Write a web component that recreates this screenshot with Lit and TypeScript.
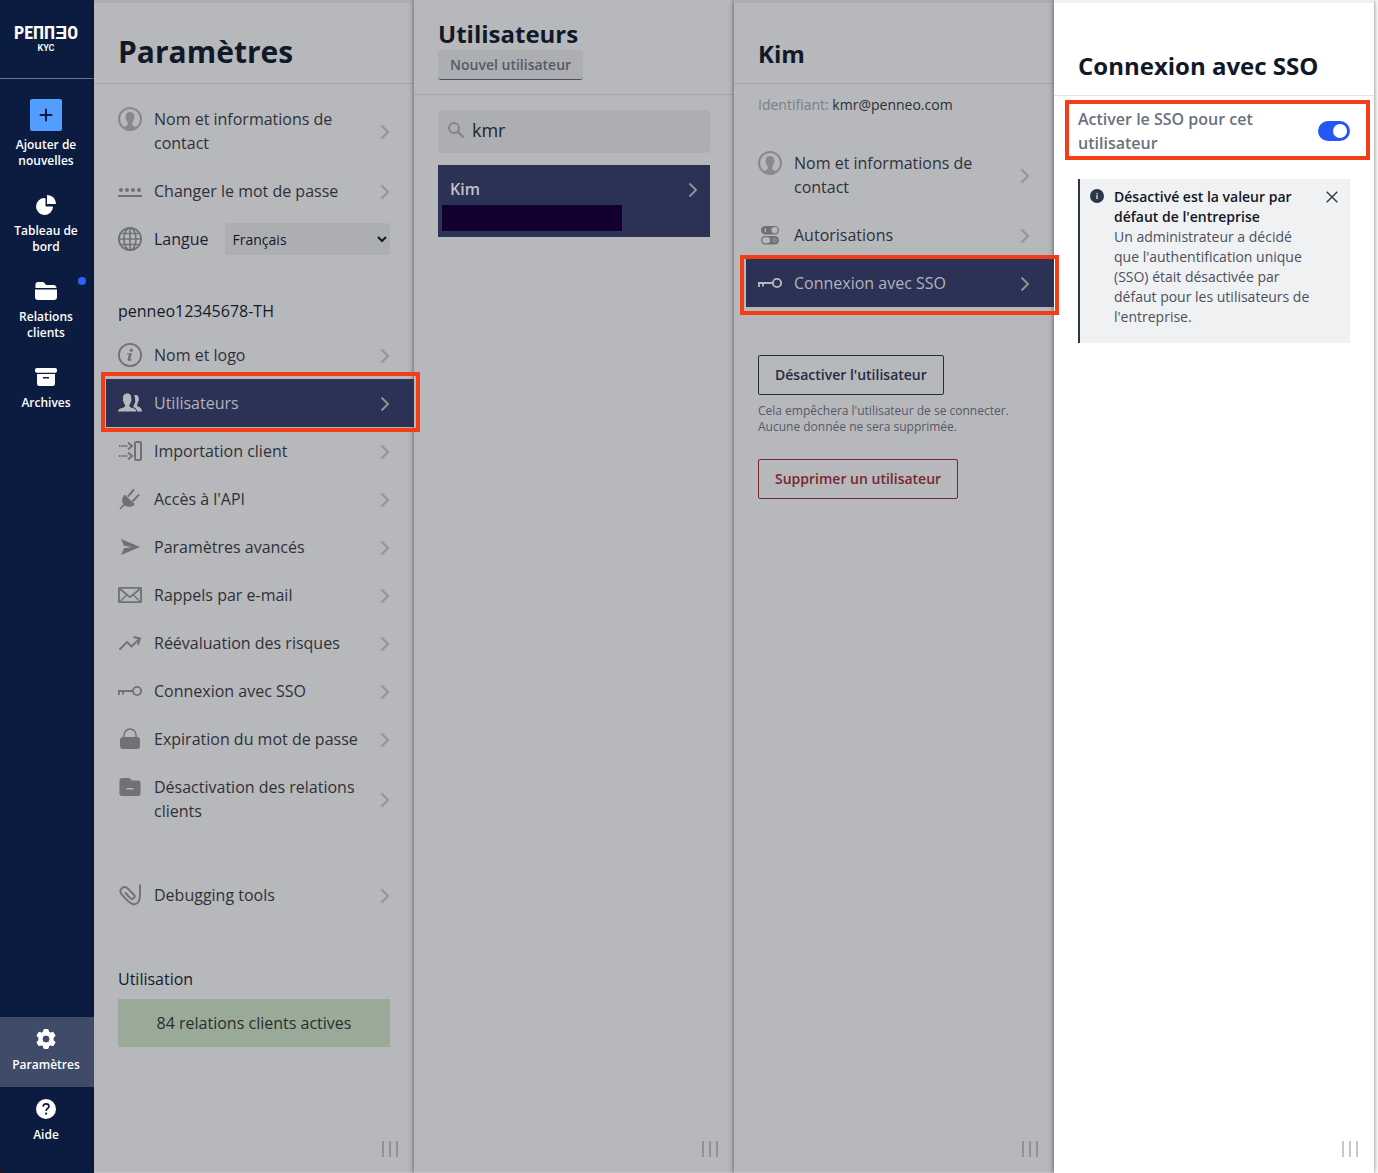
import { LitElement, html, css, svg, nothing, TemplateResult } from "lit";
import { customElement, property } from "lit/decorators.js";
import { classMap } from "lit/directives/class-map.js";

type MenuItem = { icon: string; label: string; active?: boolean; mark?: string };

const icons: Record<string, TemplateResult> = {
  user: svg`<g opacity=".65"><circle cx="12" cy="12" r="11" fill="none" stroke="currentColor" stroke-width="2"/>
    <path fill="currentColor" d="M12 5c-2.800 0-4.200 1.600-4.200 4.200 0 1-.4 1.200-.1 2.200.2.7.6.8.8 1.600.3 1.300.6 1.900 1.200 2.600V18c-.8 1.300-3.400 1.500-5 2.700A11 11 0 0 0 12 23.500a11 11 0 0 0 7.300-2.800c-1.600-1.200-4.200-1.400-5-2.700v-2.400c.6-.7.900-1.300 1.200-2.600.2-.8.6-.9.8-1.600.3-1-.1-1.200-.1-2.200C16.200 6.600 14.800 5 12 5z"/></g>`,
  password: svg`<g fill="currentColor"><circle cx="3" cy="11" r="2"/><circle cx="9" cy="11" r="2"/><circle cx="15" cy="11" r="2"/><circle cx="21" cy="11" r="2"/><path d="M0 16h24v2H0z"/></g>`,
  globe: svg`<g fill="none" stroke="currentColor" stroke-width="1.600"><circle cx="12" cy="12" r="11.100" stroke-width="1.800"/><ellipse cx="12" cy="12" rx="6" ry="11"/><path d="M12 1v22M1 12h22M3.500 6.500h17M3.500 17.500h17"/></g>`,
  info: svg`<circle cx="12" cy="12" r="11.100" fill="none" stroke="currentColor" stroke-width="1.800"/><circle cx="13.300" cy="7.200" r="1.600" fill="currentColor"/><path fill="currentColor" d="M9 10.600l4.900-.6-1.700 6.300c-.1.500.2.6.6.3l1-.8.300.4c-1 1.200-2 1.900-3 1.900-1.300 0-1.700-.8-1.400-2l1.200-4.300c.1-.5 0-.6-.5-.6H9z"/>`,
  users: svg`<g fill="currentColor"><path d="M16 4.600c2.800-1.600 5.200.2 4.700 3.600.4.800.2 1.700-.4 2.200-.3 1.600-.9 2.200-1.200 2.800v1.600c1.200 1.600 4.900 1.400 4.900 5.700h-4.600c-.4-2.500-2.200-3.500-4.200-4.500.1-1.300.9-2.300 1.300-3.600.9-1.100 1-2.500.5-3.500.2-1.700-.1-3.100-1-4.300z"/><path d="M9.200 2.600C6.200 2.600 4.700 4.700 5.100 8c-.5.900-.2 2.100.5 2.700.2 1.400.7 2.300 1.400 3v1.700C5.800 17.300 0 16.800 0 20.500h18.400c0-3.700-5.800-3.200-7-5.100v-1.700c.7-.7 1.200-1.600 1.400-3 .7-.6 1-1.800.5-2.700.4-3.300-1.100-5.400-4.100-5.400z"/></g>`,
  import: svg`<g fill="none" stroke="currentColor"><rect x="17" y="3" width="6" height="18" rx="1.500" stroke-width="2"/><path d="M1 7h9M1 17h9" stroke-width="1.800" stroke-dasharray="1.400 .8"/><path d="M10 3.500L14 7l-4 3.500M10 13.500l4 3.500-4 3.500" stroke-width="1.900"/></g>`,
  plug: svg`<g fill="currentColor"><path d="M6.600 7.400L17 17.200c-3 3.200-7.300 3.200-10.300 1L3 21.900l-1.500.4.400-1.500 3.500-3.600c-2-2.900-1.700-6.700 1.200-9.800z"/></g><path d="M9.800 9.600L16 2.500M14.500 14.500l6.500-6.900" fill="none" stroke="currentColor" stroke-width="2"/>`,
  send: svg`<path fill="currentColor" d="M3 4l19 8-19 8 3-6.800 8-1.200-8-1.200z"/>`,
  mail: svg`<g fill="none" stroke="currentColor"><rect x=".9" y="4.900" width="22.200" height="14.200" rx=".6" stroke-width="1.900"/><path d="M2 6l10 8.200L22 6" stroke-width="1.800"/><path d="M2.500 18l6-6M21.500 18l-6-6" stroke-width="1.200"/></g>`,
  trend: svg`<path fill="none" stroke="currentColor" stroke-width="1.800" d="M1.500 18.500L9 11l4.500 4.500L22 7.500M15.500 6l6.500 1.500-2 6.500"/>`,
  key: svg`<g fill="none" stroke="currentColor"><circle cx="19" cy="12" r="4.100" stroke-width="1.900"/><path d="M15 12H0" stroke-width="2"/><path d="M1 12v4M5 12v3.500" stroke-width="1.800"/></g>`,
  lock: svg`<rect x="2" y="10" width="20" height="12" rx="3" fill="currentColor"/><path d="M6 11V8a6 6 0 0 1 12 0v3" fill="none" stroke="currentColor" stroke-width="1.500"/>`,
  folder: svg`<path fill="currentColor" fill-rule="evenodd" d="M4 3h6.500c1 0 1.600.4 2.300 1.200L14 5.500h6a2.500 2.500 0 0 1 2.500 2.500v10.500A2.500 2.500 0 0 1 20 21H4a2.500 2.500 0 0 1-2.500-2.500v-13A2.500 2.500 0 0 1 4 3zm4.500 10v1.400h7V13z"/>`,
  clip: svg`<path fill="none" stroke="currentColor" stroke-width="1.900" d="M22 1.500v10c0 6-1 9.500-5.500 9.800-3.500 0-5-1.500-8-4.700l-4.800-5.200c-3.600-4 1.600-10.400 6.200-5.800l5.800 5.900c2.400 2.700-1 6-3.600 3.400L7 9.500"/>`,
  toggles: svg`<g fill="currentColor"><rect x="3" y="3" width="18" height="8.400" rx="4.200"/><rect x="3" y="13" width="18" height="8.400" rx="4.200"/></g><g class="hole"><circle cx="16.600" cy="7.200" r="3.100"/><rect x="6.800" y="5.200" width="1.200" height="4"/><rect x="4.300" y="14.200" width="7.800" height="6" rx="3"/></g><circle cx="16.600" cy="17.200" r="1.700" fill="none" stroke="#a0a1a5" stroke-width="1"/>`,
  pie: svg`<g fill="currentColor"><path d="M10.500 5a8.500 8.500 0 1 0 8.500 9c0-.3-.2-.5-.5-.5h-7V5.500c0-.3-.5-.5-1-.5z"/><path d="M13 2.500v8.500h8.500c.4 0 .5-.2.500-.5a8.800 8.800 0 0 0-8.500-8.500c-.3 0-.5.200-.5.500z"/></g>`,
  folders: svg`<g fill="currentColor"><path d="M1.500 9V5.500A2.500 2.500 0 0 1 4 3h4.500c1 0 1.500.3 2.200 1.200L12 6h7.500c1.800 0 2.800 1 3 3z"/><path d="M1 10.500h22V18a3 3 0 0 1-3 3H4a3 3 0 0 1-3-3z"/></g>`,
  archive: svg`<g fill="currentColor"><rect x="1" y="3" width="22" height="4.800" rx="1.800"/><path fill-rule="evenodd" d="M3 9h18v9.500a2.500 2.500 0 0 1-2.500 2.500h-13A2.500 2.500 0 0 1 3 18.500zm6 3v1.500h6V12z"/></g>`,
  gear: svg`<path fill="currentColor" fill-rule="evenodd" d="M10 2.500h4l.7 2.600 1.700 1 2.700-.8 2 3.500-2 1.900v2.600l2 1.900-2 3.500-2.700-.8-1.700 1-.7 2.600h-4l-.7-2.600-1.700-1-2.700.8-2-3.500 2-1.900v-2.600l-2-1.900 2-3.500 2.700.8 1.700-1zM12 8a4 4 0 1 0 0 8 4 4 0 0 0 0-8z" stroke="currentColor" stroke-width="1" stroke-linejoin="round"/>`,
  help: svg`<circle cx="12" cy="12" r="10" fill="currentColor"/><path d="M9.100 9.600C9.200 8 10.400 6.900 12 6.900c1.700 0 3 1 3 2.500 0 1.900-2.900 2.300-2.900 4.500" fill="none" stroke="#0c1c40" stroke-width="1.700"/><circle cx="12.100" cy="16.700" r="1.100" fill="#0c1c40"/>`,
};

const glyph = (name: string) =>
  html`<svg class="glyph" viewBox="0 0 24 24" aria-hidden="true">${icons[name]}</svg>`;

const chevron = html`<svg class="chevron" viewBox="0 0 10 20" aria-hidden="true">
  <path d="M1.500 4.500l6.500 6.500-6.500 6.500" fill="none" stroke="currentColor" stroke-width="1.900" />
</svg>`;

const menu = (items: MenuItem[]) => html`<ul class="menu">
  ${items.map(
    (item) => html`<li class="entry">
      <a class=${classMap({ row: true, active: !!item.active })} href="#">
        ${glyph(item.icon)}<span class="label">${item.label}</span>${chevron}
      </a>
      ${item.mark ? html`<span class="mark ${item.mark}"></span>` : nothing}
    </li>`
  )}
</ul>`;

const accountItems: MenuItem[] = [
  { icon: "user", label: "Nom et informations de contact" },
  { icon: "password", label: "Changer le mot de passe" },
];

const companyItems: MenuItem[] = [
  { icon: "info", label: "Nom et logo" },
  { icon: "users", label: "Utilisateurs", active: true, mark: "mark-users" },
  { icon: "import", label: "Importation client" },
  { icon: "plug", label: "Accès à l'API" },
  { icon: "send", label: "Paramètres avancés" },
  { icon: "mail", label: "Rappels par e-mail" },
  { icon: "trend", label: "Réévaluation des risques" },
  { icon: "key", label: "Connexion avec SSO" },
  { icon: "lock", label: "Expiration du mot de passe" },
  { icon: "folder", label: "Désactivation des relations clients" },
];

const userItems: MenuItem[] = [
  { icon: "user", label: "Nom et informations de contact" },
  { icon: "toggles", label: "Autorisations" },
  { icon: "key", label: "Connexion avec SSO", active: true, mark: "mark-sso" },
];

@customElement("side-bar")
class SideBar extends LitElement {
  static styles = css`
    :host {
      display: flex;
      flex-direction: column;
      box-sizing: border-box;
      background: #0c1c40;
      border-radius: 0 0 0 6px;
      padding-bottom: 16px;
      color: #fff;
    }
    .brand {
      display: flex;
      flex-direction: column;
      align-items: center;
      box-sizing: border-box;
      height: 79px;
      padding: 24px 2px 0 0;
      border-bottom: 1px solid #6d768b;
    }
    .wordmark {
      font: 700 18px/18px "Roboto Condensed", "Liberation Sans Narrow", Roboto, sans-serif;
    }
    .product {
      font: 600 9px/12px Roboto, sans-serif;
    }
    .links {
      padding-top: 8px;
      flex: 1;
    }
    .item {
      position: relative;
      display: flex;
      flex-direction: column;
      align-items: center;
      gap: 6px;
      padding: 10px 10px 14px 8px;
      color: inherit;
      text-decoration: none;
      text-align: center;
      font-size: 12px;
      line-height: 16px;
      font-weight: 600;
    }
    .current {
      background: #3f4b68;
    }
    .primary {
      padding-top: 12px;
    }
    .glyph {
      width: 24px;
      height: 24px;
    }
    .add {
      width: 32px;
      height: 32px;
      border-radius: 2px;
      background: #539dff;
    }
    .dot {
      position: absolute;
      top: 8px;
      right: 8px;
      width: 8px;
      height: 8px;
      border-radius: 50%;
      background: #2962ff;
    }
  `;

  private link(icon: string, label: string, current = false, dot = false) {
    return html`<a class=${classMap({ item: true, current })} href="#">
      ${glyph(icon)}<span>${label}</span>${dot ? html`<span class="dot"></span>` : nothing}
    </a>`;
  }

  render() {
    return html`
      <div class="brand"><span class="wordmark">PEΠΠƎO</span><span class="product">KYC</span></div>
      <nav class="links">
        <a class="item primary" href="#">
          <svg class="add" viewBox="0 0 32 32" aria-hidden="true">
            <path d="M16 10.500v11M10.500 16h11" stroke="#0c1c40" stroke-width="2" stroke-linecap="round" />
          </svg>
          <span>Ajouter de nouvelles</span>
        </a>
        ${this.link("pie", "Tableau de bord")} ${this.link("folders", "Relations clients", false, true)}
        ${this.link("archive", "Archives")}
      </nav>
      ${this.link("gear", "Paramètres", true)} ${this.link("help", "Aide")}
    `;
  }
}

@customElement("settings-panel")
class SettingsPanel extends LitElement {
  @property() heading = "";
  @property({ reflect: true }) tone = "dim";
  @property({ reflect: true }) top = "normal";

  static styles = css`
    :host {
      display: flex;
      flex-direction: column;
      box-sizing: border-box;
      min-width: 0;
      background: #b7b8bc;
      border-top: 3px solid #adaeb2;
      border-bottom: 1px solid #c4c5c8;
      box-shadow: 0 0 5px rgba(0, 0, 0, 0.55);
    }
    :host([tone="light"]) {
      background: #fff;
      border-color: #f2f2f2 #fff #fff;
    }
    :host([top="compact"]) {
      border-top: 0;
    }
    .head {
      display: flex;
      flex-direction: column;
      align-items: flex-start;
      gap: 1px;
      padding: 36px 24px 14px;
      border-bottom: 1px solid #a4a5a9;
    }
    :host([top="main"]) .head {
      padding: 31px 24px 13px;
    }
    :host([top="compact"]) .head {
      padding-top: 19px;
    }
    :host([top="low"]) .head {
      padding-top: 48px;
    }
    :host([tone="light"]) .head {
      border-color: #e3e4e6;
    }
    .title {
      margin: 0;
      font-size: 24px;
      line-height: 30px;
      font-weight: 700;
      color: #111827;
    }
    :host([top="main"]) .title {
      font-size: 30px;
      line-height: 36px;
    }
    .grip {
      display: flex;
      gap: 5px;
      align-self: flex-end;
      margin: auto 16px 15px 0;
    }
    .bar {
      width: 2px;
      height: 16px;
      background: #929397;
    }
    :host([tone="light"]) .bar {
      background: #c9c9c9;
    }
  `;

  render() {
    return html`
      <header class="head"><h2 class="title">${this.heading}</h2><slot name="action"></slot></header>
      <slot></slot>
      <div class="grip"><span class="bar"></span><span class="bar"></span><span class="bar"></span></div>
    `;
  }
}

@customElement("app-root")
class AppRoot extends LitElement {
  static styles = css`
    :host {
      display: grid;
      grid-template-columns: 94px repeat(4, minmax(0, 1fr));
      box-sizing: border-box;
      min-height: 100vh;
      padding-right: 4px;
      background: linear-gradient(90deg, #1a1a10 94px, #fff 94px);
      font-family: "Open Sans", "Noto Sans", sans-serif;
      font-size: 16px;
      line-height: 24px;
      color: #1c2030;
    }
    button,
    input,
    select {
      font-family: inherit;
      box-sizing: border-box;
    }
    .menu {
      list-style: none;
      margin: 0;
      padding: 0 0 0 12px;
    }
    .entry {
      position: relative;
    }
    .row {
      display: flex;
      gap: 12px;
      padding: 12px 24px 12px 12px;
      color: #2f3136;
      text-decoration: none;
    }
    .glyph {
      flex: none;
      width: 24px;
      height: 24px;
      color: #6f7176;
    }
    .hole {
      fill: #b7b8bc;
    }
    .label {
      flex: 1;
    }
    .chevron {
      flex: none;
      align-self: center;
      width: 10px;
      height: 20px;
      color: #929397;
    }
    .active {
      background: #2b3255;
      color: #b2b4ba;
    }
    .active .glyph {
      color: #b7b8bc;
    }
    .mark {
      position: absolute;
      z-index: 3;
      border: 4px solid #f23d17;
      pointer-events: none;
    }
    .mark-users {
      inset: -7px -6px -5px -5px;
    }
    .mark-sso {
      inset: -4px -5px -8px -6px;
    }
    .mark-switch {
      inset: -7px -20px -5px -13px;
    }
    .body {
      padding-top: 11px;
    }
    .language {
      display: flex;
      align-items: center;
      gap: 12px;
      height: 48px;
      padding: 0 24px;
    }
    .picker {
      position: relative;
      flex: 1;
      display: flex;
      margin-left: 4px;
    }
    .select {
      appearance: none;
      width: 100%;
      height: 32px;
      padding: 0 24px 0 8px;
      border: 0;
      border-radius: 4px;
      background: #adaeb2;
      font-size: 14px;
      color: #111827;
    }
    .arrow {
      position: absolute;
      right: 2px;
      top: 10px;
      width: 12px;
      height: 12px;
      pointer-events: none;
    }
    .subhead {
      margin: 0;
      padding: 36px 24px 8px;
      font-size: 16px;
      line-height: 24px;
      font-weight: 400;
      color: #151a29;
    }
    .spaced {
      padding-top: 36px;
    }
    .usage {
      padding-top: 48px;
    }
    .quota {
      margin: 0 24px 24px;
      padding: 12px;
      background: #9aaa98;
      text-align: center;
      color: #26302e;
    }
    .new {
      height: 30px;
      padding: 0 12px;
      border: 0;
      border-bottom: 1px solid #4c5064;
      border-radius: 3px;
      background: #adaeb2;
      font-size: 14px;
      font-weight: 600;
      color: #555969;
    }
    .users {
      display: flex;
      flex-direction: column;
      gap: 12px;
      padding: 15px 24px 0;
    }
    .search {
      display: flex;
      align-items: center;
      box-sizing: border-box;
      gap: 8px;
      height: 43px;
      padding: 0 10px 3px;
      border-radius: 4px;
      background: #adaeb2;
    }
    .lens {
      width: 16px;
      height: 16px;
      color: #85868a;
    }
    .query {
      flex: 1;
      min-width: 0;
      padding: 0;
      border: 0;
      outline: 0;
      background: none;
      font-size: 18px;
      color: #20242e;
    }
    .person {
      display: flex;
      flex-direction: column;
      height: 72px;
      box-sizing: border-box;
      padding: 12px 12px 0;
      background: #2b3255;
      color: #c0c2c8;
      font-weight: 600;
      text-decoration: none;
    }
    .name {
      display: flex;
      justify-content: space-between;
    }
    .redacted {
      width: 180px;
      height: 26px;
      margin: 4px 0 0 -8px;
      background: #140030;
    }
    .login {
      margin: 0 0 24px;
      padding: 0 24px;
      font-size: 14px;
      line-height: 20px;
      color: #2b2e36;
    }
    .key {
      color: #7b7e89;
    }
    .danger-zone {
      display: flex;
      flex-direction: column;
      align-items: flex-start;
      padding: 48px 24px 0;
    }
    .outline {
      height: 40px;
      padding: 0 16px 2px;
      border: 1px solid #262c3f;
      border-radius: 2px;
      background: none;
      font-size: 14px;
      font-weight: 600;
      color: #262c3f;
    }
    .red {
      border-color: #7a2630;
      color: #7a2630;
    }
    .hint {
      margin: 8px 0 24px;
      font-size: 12px;
      line-height: 16px;
      color: #555969;
    }
    .sso {
      display: flex;
      flex-direction: column;
      gap: 24px;
      padding: 11px 24px 0;
    }
    .switch-row {
      position: relative;
      display: flex;
      align-items: center;
      justify-content: space-between;
      gap: 48px;
      font-weight: 600;
      color: #6b7080;
    }
    .switch {
      appearance: none;
      flex: none;
      width: 32px;
      height: 20px;
      margin: 0;
      padding: 3px;
      border-radius: 10px;
      background: #c4c5c8;
    }
    .switch::before {
      content: "";
      display: block;
      width: 14px;
      height: 14px;
      border-radius: 50%;
      background: #fff;
    }
    .switch:checked {
      background: #2557f5;
    }
    .switch:checked::before {
      margin-left: auto;
    }
    .notice {
      display: flex;
      align-items: flex-start;
      padding: 8px 12px 16px 10px;
      border-left: 2px solid #2d3748;
      background: #f0f1f3;
      font-size: 14px;
      line-height: 20px;
      color: #4a5060;
    }
    .badge {
      flex: none;
      width: 14px;
      height: 14px;
      margin: 2px 10px 0 0;
    }
    .text {
      flex: 1;
      margin: 0 12px 0 0;
    }
    .strong {
      display: block;
      font-weight: 600;
      color: #111827;
    }
    .close {
      display: flex;
      flex: none;
      margin: 4px 0 0;
      padding: 0;
      border: 0;
      background: none;
    }
    .cross {
      width: 12px;
      height: 12px;
    }
  `;

  render() {
    return html`
      <side-bar></side-bar>

      <settings-panel heading="Paramètres" top="main">
        <div class="body">
          ${menu(accountItems)}
          <div class="language">
            ${glyph("globe")}<label for="language">Langue</label>
            <div class="picker">
              <select class="select" id="language"><option>Français</option></select>
              <svg class="arrow" viewBox="0 0 12 12" aria-hidden="true">
                <path d="M2 4l4 4 4-4" fill="none" stroke="#111827" stroke-width="2" />
              </svg>
            </div>
          </div>
          <h3 class="subhead">penneo12345678-TH</h3>
          ${menu(companyItems)}
          <div class="spaced">${menu([{ icon: "clip", label: "Debugging tools" }])}</div>
          <h3 class="subhead usage">Utilisation</h3>
          <div class="quota">84 relations clients actives</div>
        </div>
      </settings-panel>

      <settings-panel heading="Utilisateurs" top="compact">
        <button class="new" slot="action" type="button">Nouvel utilisateur</button>
        <div class="users">
          <div class="search">
            <svg class="lens" viewBox="0 0 16 16" aria-hidden="true">
              <g fill="none" stroke="currentColor" stroke-width="2"><circle cx="6" cy="6" r="5" /><path d="M9.700 9.700l5.700 5.700" stroke-width="2.400" /></g>
            </svg>
            <input class="query" type="text" aria-label="Utilisateurs" .value=${"kmr"} />
          </div>
          <a class="person" href="#">
            <span class="name">Kim ${chevron}</span>
            <span class="redacted"></span>
          </a>
        </div>
      </settings-panel>

      <settings-panel heading="Kim">
        <div class="body">
          <p class="login"><span class="key">Identifiant:</span> kmr@penneo.com</p>
          ${menu(userItems)}
          <div class="danger-zone">
            <button class="outline" type="button">Désactiver l'utilisateur</button>
            <p class="hint">Cela empêchera l'utilisateur de se connecter. Aucune donnée ne sera supprimée.</p>
            <button class="outline red" type="button">Supprimer un utilisateur</button>
          </div>
        </div>
      </settings-panel>

      <settings-panel heading="Connexion avec SSO" tone="light" top="low">
        <div class="sso">
          <div class="switch-row">
            <label for="sso">Activer le SSO pour cet utilisateur</label>
            <input class="switch" id="sso" type="checkbox" role="switch" checked />
            <span class="mark mark-switch"></span>
          </div>
          <div class="notice">
            <svg class="badge" viewBox="0 0 14 14" aria-hidden="true">
              <circle cx="7" cy="7" r="7" fill="#2d3748" />
              <path d="M7 6v4M7 4v1.200" stroke="#d5d7dc" stroke-width="1.400" />
            </svg>
            <p class="text">
              <strong class="strong">Désactivé est la valeur par défaut de l'entreprise</strong>
              Un administrateur a décidé que l'authentification unique (SSO) était désactivée par défaut pour
              les utilisateurs de l'entreprise.
            </p>
            <button class="close" type="button" aria-label="Fermer">
              <svg class="cross" viewBox="0 0 12 12" aria-hidden="true">
                <path d="M.7.7l10.600 10.600M11.300.7L.7 11.300" stroke="#2d3748" stroke-width="1.400" />
              </svg>
            </button>
          </div>
        </div>
      </settings-panel>
    `;
  }
}
